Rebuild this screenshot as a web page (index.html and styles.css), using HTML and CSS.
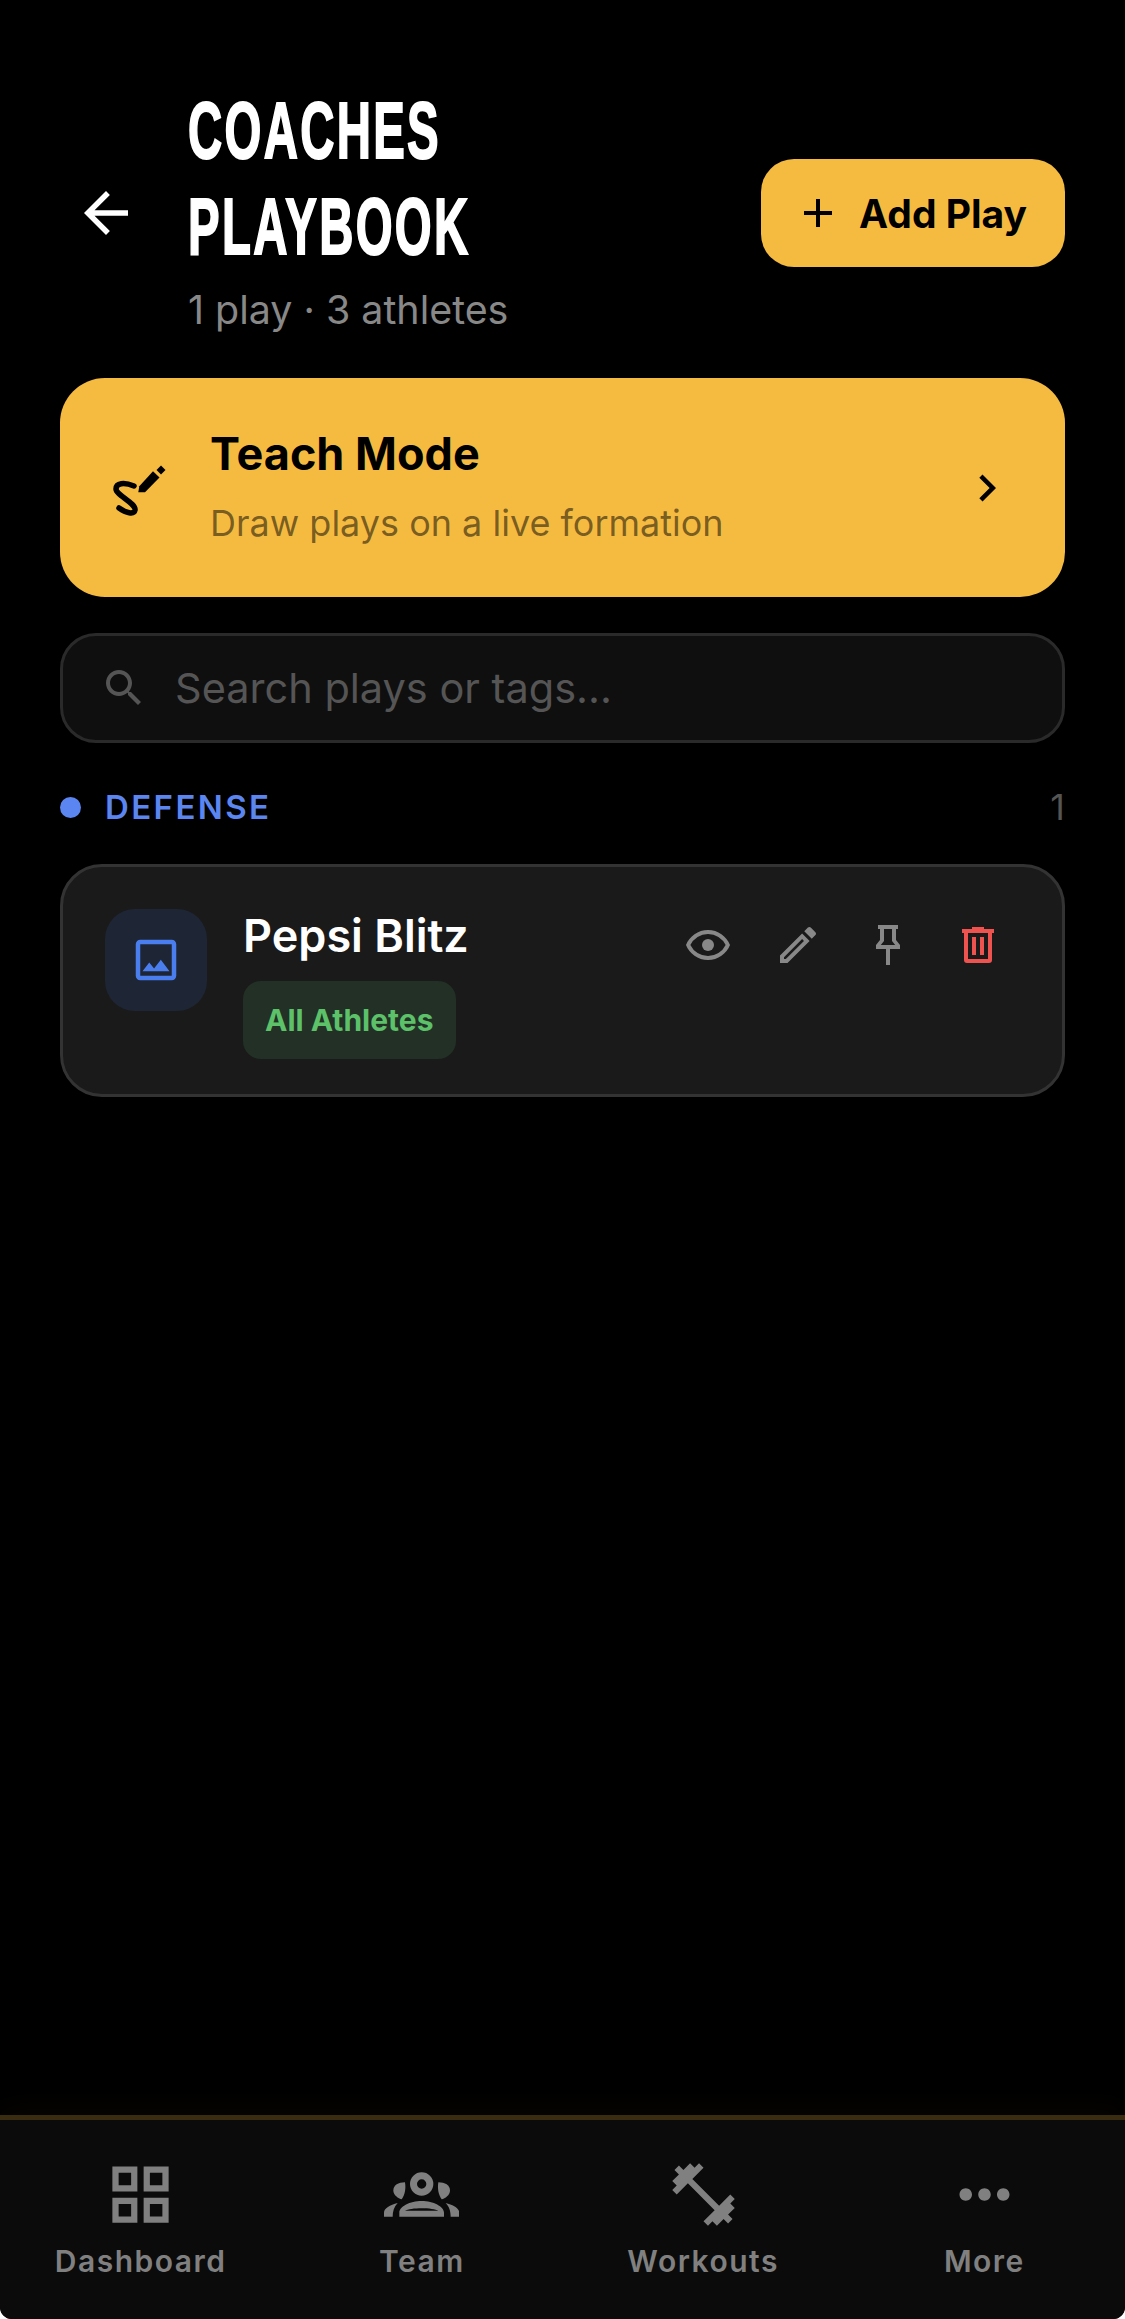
FILE: index.html
```html
<!DOCTYPE html>
<html lang="en">
<head>
<meta charset="utf-8">
<title>Coaches Playbook</title>
<link rel="stylesheet" href="styles.css">
</head>
<body>
<div class="app">
  <header class="header">
    <button class="back" aria-label="Back">
      <svg class="back-icon" viewBox="0 0 24 24"><path d="M20 11H7.83l5.59-5.59L12 4l-8 8 8 8 1.41-1.41L7.83 13H20v-2z"/></svg>
    </button>
    <div class="heading">
      <h1 class="title">COACHES<br>PLAYBOOK</h1>
      <p class="subtitle">1 play · 3 athletes</p>
    </div>
    <button class="add">
      <svg class="add-icon" viewBox="0 0 24 24"><path d="M19 13h-6v6h-2v-6H5v-2h6V5h2v6h6v2z"/></svg>
      <span>Add Play</span>
    </button>
  </header>

  <main class="main">
    <section class="teach">
      <svg class="teach-icon" viewBox="0 0 90 70">
        <path class="squiggle" d="M34 33C24 29 16 30 16 36C16 42 36 50 35 57C34 62 26 60 19 55"/>
        <path d="M38.3 39.3L39.3 33.3L53 18.3L59.5 24.5L45 39.3Z"/>
        <path d="M61 12.5L65.5 17L61 21.5L56.5 17Z"/>
      </svg>
      <div class="teach-text">
        <div class="teach-title">Teach Mode</div>
        <div class="teach-sub">Draw plays on a live formation</div>
      </div>
      <svg class="chevron" viewBox="0 0 24 24"><path d="M10 6L8.59 7.41 13.17 12l-4.58 4.59L10 18l6-6z"/></svg>
    </section>

    <div class="search">
      <svg class="search-icon" viewBox="0 0 24 24"><path d="M15.5 14h-.79l-.28-.27C15.41 12.59 16 11.11 16 9.5 16 5.91 13.09 3 9.5 3S3 5.91 3 9.5 5.91 16 9.5 16c1.61 0 3.09-.59 4.23-1.57l.27.28v.79l5 4.99L20.49 19l-4.99-5zm-6 0C7.01 14 5 11.99 5 9.5S7.01 5 9.5 5 14 7.01 14 9.5 11.99 14 9.5 14z"/></svg>
      <span class="placeholder">Search plays or tags...</span>
    </div>

    <div class="section-head">
      <span class="dot"></span>
      <span class="section-name">DEFENSE</span>
      <span class="section-count">1</span>
    </div>

    <article class="card">
      <div class="thumb">
        <svg class="thumb-icon" viewBox="0 0 24 24"><path d="M19 5v14H5V5h14m0-2H5c-1.1 0-2 .9-2 2v14c0 1.1.9 2 2 2h14c1.1 0 2-.9 2-2V5c0-1.1-.9-2-2-2zm-4.86 8.86l-3 3.87L9 13.14 6 17h12l-3.86-5.14z"/></svg>
      </div>
      <div class="card-body">
        <div class="play-name">Pepsi Blitz</div>
        <span class="badge">All Athletes</span>
      </div>
      <div class="actions">
        <svg class="action" viewBox="0 0 24 24"><path fill-rule="evenodd" d="M12 4.5C7 4.5 2.73 7.61 1 12c1.73 4.39 6 7.5 11 7.5s9.27-3.11 11-7.5c-1.73-4.39-6-7.5-11-7.5zm0 2A9.77 9.77 0 0 1 20.82 12 9.77 9.77 0 0 1 12 17.5 9.77 9.77 0 0 1 3.18 12 9.77 9.77 0 0 1 12 6.5z"/><circle cx="12" cy="12" r="3"/></svg>
        <svg class="action" viewBox="0 0 24 24"><path d="M14.06 9.02l.92.92L5.92 19H5v-.92l9.06-9.06M17.66 3c-.25 0-.51.1-.7.29l-1.83 1.83 3.75 3.75 1.83-1.83c.39-.39.39-1.02 0-1.41l-2.34-2.34c-.2-.2-.45-.29-.71-.29zm-3.6 3.19L3 17.25V21h3.75L17.81 9.94l-3.75-3.75z"/></svg>
        <svg class="action" viewBox="0 0 24 24"><path fill-rule="evenodd" d="M7 2h10v2h-1v5.5l2 2.5v2h-5v8h-2v-8H6v-2l2-2.5V4H7zM10 4v6l-1.6 2h7.2L14 10V4z"/></svg>
        <svg class="action danger" viewBox="0 0 24 24"><path fill-rule="evenodd" d="M9 3h6v1h5v2H4V4h5zM5 6h14v13.5a1.5 1.5 0 0 1-1.5 1.5h-11A1.5 1.5 0 0 1 5 19.5zM7 6v13h10V6zM9 8h2v9H9zM13 8h2v9h-2z"/></svg>
      </div>
    </article>
  </main>

  <nav class="nav">
    <div class="nav-item">
      <svg class="nav-icon" viewBox="0 0 24 24"><path d="M3 3v8h8V3H3zm6 6H5V5h4v4zm-6 4v8h8v-8H3zm6 6H5v-4h4v4zm4-16v8h8V3h-8zm6 6h-4V5h4v4zm-6 4v8h8v-8h-8zm6 6h-4v-4h4v4z"/></svg>
      <span>Dashboard</span>
    </div>
    <div class="nav-item">
      <svg class="nav-icon" viewBox="882 21 225 225">
        <circle class="ring" cx="995" cy="102" r="24.5"/>
        <path d="M945 97C925 97 910 105 910 122C910 135 925 145 935 148C945 135 948 115 945 97Z"/>
        <path d="M1045 97C1065 97 1080 105 1080 122C1080 135 1065 145 1055 148C1045 135 1042 115 1045 97Z"/>
        <path fill-rule="evenodd" d="M928 200V188C928 170 960 153 995 153C1030 153 1062 170 1062 188V200ZM945 182C960 172 1030 172 1045 182Z"/>
        <path d="M882 200V188C882 175 900 165 923 159C912 170 908 185 908 200Z"/>
        <path d="M1108 200V188C1108 175 1090 165 1067 159C1078 170 1082 185 1082 200Z"/>
      </svg>
      <span>Team</span>
    </div>
    <div class="nav-item">
      <svg class="nav-icon" viewBox="0 0 24 24"><path d="M20.57 14.86L22 13.43 20.57 12 17 15.57 8.43 7 12 3.43 10.57 2 9.14 3.43 7.71 2 5.57 4.14 4.14 2.71 2.71 4.14l1.43 1.43L2 7.71l1.43 1.43L2 10.57 3.43 12 7 8.43 15.57 17 12 20.57 13.43 22l1.43-1.43L16.29 22l2.14-2.14 1.43 1.43 1.43-1.43-1.43-1.43L22 16.29z"/></svg>
      <span>Workouts</span>
    </div>
    <div class="nav-item">
      <svg class="nav-icon" viewBox="0 0 24 24"><path d="M6 10c-1.1 0-2 .9-2 2s.9 2 2 2 2-.9 2-2-.9-2-2-2zm12 0c-1.1 0-2 .9-2 2s.9 2 2 2 2-.9 2-2-.9-2-2-2zm-6 0c-1.1 0-2 .9-2 2s.9 2 2 2 2-.9 2-2-.9-2-2-2z"/></svg>
      <span>More</span>
    </div>
  </nav>
</div>
</body>
</html>
```
FILE: styles.css
```css
* { box-sizing: border-box; }
html, body { margin: 0; padding: 0; height: 100%; background: #fff; }
body { font-family: Inter, "Liberation Sans", sans-serif; }
svg { display: block; flex: none; fill: currentColor; }
button { border: 0; background: none; padding: 0; margin: 0; font: inherit; color: inherit; }
p, h1 { margin: 0; }

.app {
  height: 2319px;
  display: flex;
  flex-direction: column;
  background: #000;
  border-radius: 0 0 12px 12px;
  overflow: hidden;
}

.header {
  display: flex;
  align-items: center;
  padding: 83px 60px 35px 73px;
}
.back { color: #fff; width: 66px; height: 66px; margin-right: 49px; flex: none; }
.back-icon { width: 66px; height: 66px; }
.heading { flex: 1; min-width: 0; }
.title {
  font-family: "Liberation Sans", sans-serif;
  font-weight: 700;
  font-size: 79px;
  line-height: 96px;
  letter-spacing: 3.8px;
  color: #fff;
  -webkit-text-stroke: 2px #fff;
  transform: scaleX(.6);
  transform-origin: left center;
  white-space: nowrap;
}
.subtitle { padding-top: 2px; font-size: 39.4px; line-height: 66px; color: #888; }
.add {
  flex: none;
  display: flex;
  align-items: center;
  gap: 17px;
  height: 108px;
  padding: 0 38px 0 33px;
  border-radius: 33px;
  background: #f5bb41;
  color: #000;
  font-size: 39px;
  font-weight: 700;
}
.add-icon { width: 48px; height: 48px; }

.main { flex: 1; padding: 0 60px; }

.teach {
  display: flex;
  align-items: center;
  height: 219px;
  padding: 0 51px 0 40px;
  border-radius: 45px;
  background: #f5bb41;
  color: #000;
}
.teach-icon { width: 90px; height: 70px; margin-right: 20px; }
.squiggle { fill: none; stroke: #000; stroke-width: 5.5; stroke-linecap: round; }
.teach-text { flex: 1; margin-top: -5px; }
.teach-title { font-size: 45px; line-height: 66px; font-weight: 700; }
.teach-sub { font-size: 36px; line-height: 54px; margin-top: 9px; color: rgba(0, 0, 0, .52); }
.chevron { width: 54px; height: 54px; }

.search {
  display: flex;
  align-items: center;
  gap: 27px;
  height: 110px;
  margin-top: 36px;
  padding: 0 37px;
  background: #0f0f0f;
  border: 3px solid #2a2a2a;
  border-radius: 36px;
  color: #555;
}
.search-icon { width: 48px; height: 48px; }
.placeholder { font-size: 41.5px; }

.section-head {
  display: flex;
  align-items: center;
  margin-top: 40px;
  height: 48px;
}
.dot { width: 21px; height: 21px; border-radius: 50%; background: #5b86f1; margin-right: 24px; }
.section-name { flex: 1; font-size: 33px; font-weight: 600; letter-spacing: 2.4px; color: #5b86f1; }
.section-count { font-size: 36px; color: #555; }

.card {
  display: flex;
  align-items: flex-start;
  height: 233px;
  margin-top: 33px;
  padding: 42px 51px 0 42px;
  background: #1a1a1a;
  border: 3px solid #333;
  border-radius: 42px;
}
.thumb {
  display: flex;
  align-items: center;
  justify-content: center;
  width: 102px;
  height: 102px;
  border-radius: 30px;
  background: #1e2635;
  color: #4a7dee;
}
.thumb-icon { width: 54px; height: 54px; }
.card-body { flex: 1; margin-left: 36px; }
.play-name { font-size: 45px; line-height: 54px; font-weight: 600; color: #fff; }
.badge {
  display: inline-block;
  margin-top: 18px;
  padding: 0 23px 0 22px;
  height: 78px;
  line-height: 78px;
  border-radius: 18px;
  background: #223026;
  color: #5cc169;
  font-size: 30px;
  font-weight: 700;
}
.actions { display: flex; gap: 42px; margin: 12px 9px 0 0; color: #888; }
.action { width: 48px; height: 48px; }
.danger { color: #ef5350; }

.nav {
  display: grid;
  grid-template-columns: repeat(4, 1fr);
  height: 204px;
  border-top: 5px solid #3a2c10;
  background: #0b0b0b;
  box-shadow: 0 -6px 30px rgba(245, 187, 65, .03);
}
.nav-item {
  display: flex;
  flex-direction: column;
  align-items: center;
  padding-top: 37px;
  color: #808080;
  font-size: 30px;
  font-weight: 600;
  letter-spacing: 1.5px;
}
.nav-icon { width: 75px; height: 75px; margin-bottom: 11px; }
.ring { fill: none; stroke: #808080; stroke-width: 21; }
```
